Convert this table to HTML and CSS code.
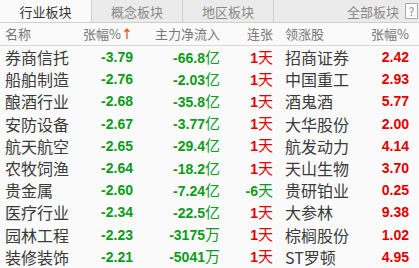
FILE: index.html
```html
<!DOCTYPE html>
<html>
<head>
<meta charset="utf-8">
<link rel="stylesheet" href="styles.css">
</head>
<body>
<div class="panel">
  <div class="tabs">
    <div class="tab active">行业板块</div>
    <div class="tab">概念板块</div>
    <div class="tab">地区板块</div>
    <div class="tab-fill">
      <span class="all">全部板块</span>
      <span class="help">?</span>
    </div>
  </div>
  <div class="table">
    <div class="row head">
      <div class="c name">名称</div>
      <div class="c pct">张幅%<span class="arrow">↑</span></div>
      <div class="c flow">主力净流入</div>
      <div class="c days">连张</div>
      <div class="c lead">领涨股</div>
      <div class="c lpct">张幅%</div>
    </div>
    <div class="row"><div class="c name">券商信托</div><div class="c pct num g">-3.79</div><div class="c flow num g">-66.8<span class="u">亿</span></div><div class="c days num r">1<span class="u">天</span></div><div class="c lead">招商证券</div><div class="c lpct num r">2.42</div></div>
    <div class="row"><div class="c name">船舶制造</div><div class="c pct num g">-2.76</div><div class="c flow num g">-2.03<span class="u">亿</span></div><div class="c days num r">1<span class="u">天</span></div><div class="c lead">中国重工</div><div class="c lpct num r">2.93</div></div>
    <div class="row"><div class="c name">酿酒行业</div><div class="c pct num g">-2.68</div><div class="c flow num g">-35.8<span class="u">亿</span></div><div class="c days num r">1<span class="u">天</span></div><div class="c lead">酒鬼酒</div><div class="c lpct num r">5.77</div></div>
    <div class="row"><div class="c name">安防设备</div><div class="c pct num g">-2.67</div><div class="c flow num g">-3.77<span class="u">亿</span></div><div class="c days num r">1<span class="u">天</span></div><div class="c lead">大华股份</div><div class="c lpct num r">2.00</div></div>
    <div class="row"><div class="c name">航天航空</div><div class="c pct num g">-2.65</div><div class="c flow num g">-29.4<span class="u">亿</span></div><div class="c days num r">1<span class="u">天</span></div><div class="c lead">航发动力</div><div class="c lpct num r">4.14</div></div>
    <div class="row"><div class="c name">农牧饲渔</div><div class="c pct num g">-2.64</div><div class="c flow num g">-18.2<span class="u">亿</span></div><div class="c days num r">1<span class="u">天</span></div><div class="c lead">天山生物</div><div class="c lpct num r">3.70</div></div>
    <div class="row"><div class="c name">贵金属</div><div class="c pct num g">-2.60</div><div class="c flow num g">-7.24<span class="u">亿</span></div><div class="c days num g">-6<span class="u">天</span></div><div class="c lead">贵研铂业</div><div class="c lpct num r">0.25</div></div>
    <div class="row"><div class="c name">医疗行业</div><div class="c pct num g">-2.34</div><div class="c flow num g">-22.5<span class="u">亿</span></div><div class="c days num r">1<span class="u">天</span></div><div class="c lead">大参林</div><div class="c lpct num r">9.38</div></div>
    <div class="row"><div class="c name">园林工程</div><div class="c pct num g">-2.23</div><div class="c flow num g">-3175<span class="u">万</span></div><div class="c days num r">1<span class="u">天</span></div><div class="c lead">棕榈股份</div><div class="c lpct num r">1.02</div></div>
    <div class="row"><div class="c name">装修装饰</div><div class="c pct num g">-2.21</div><div class="c flow num g">-5041<span class="u">万</span></div><div class="c days num r">1<span class="u">天</span></div><div class="c lead">ST罗顿</div><div class="c lpct num r">4.95</div></div>
  </div>
</div>
</body>
</html>
```
FILE: styles.css
```css
html, body {
  margin: 0;
  padding: 0;
  background: #fafafa;
}
.panel {
  width: 419px;
  height: 268px;
  overflow: hidden;
  font-family: "Noto Sans CJK SC", "Liberation Sans", sans-serif;
  background: #fafafa;
}
.tabs {
  display: flex;
  height: 22px;
  border-bottom: 1px solid #cfcfcf;
  background: #ebebeb;
}
.tab {
  width: 90px;
  border-right: 1px solid #cfcfcf;
  display: flex;
  align-items: center;
  justify-content: center;
  font-size: 13px;
  color: #888;
  background: #ebebeb;
}
.tab.active {
  width: 91px;
  background: #fafafa;
  color: #333;
}
.tab-fill {
  flex: 1;
  display: flex;
  align-items: center;
  justify-content: flex-end;
  gap: 6px;
  font-size: 13px;
  color: #888;
}
.help {
  width: 11px;
  height: 14px;
  border: 1px solid #aaa;
  background: #fafafa;
  font-size: 11px;
  line-height: 14px;
  text-align: center;
  color: #888;
  margin-right: 1px;
}
.row {
  display: grid;
  grid-template-columns: 80px 53px 87px 53px 80px 56px;
  height: 22.2px;
  align-items: center;
}
.row.head {
  height: 22px;
  border-bottom: 1px solid #d8d8d8;
  color: #777;
  font-size: 13px;
}
.c {
  white-space: nowrap;
  line-height: 18px;
}
.name {
  padding-left: 5px;
  font-size: 16px;
  color: #3a3a3a;
}
.head .name {
  font-size: 13px;
  color: #777;
}
.pct, .flow, .days, .lpct {
  text-align: right;
}
.lead {
  padding-left: 12px;
  font-size: 16px;
  color: #3a3a3a;
}
.head .lead {
  font-size: 13px;
  color: #777;
}
.arrow {
  color: #e05a00;
  font-weight: bold;
  font-size: 12px;
}
.num {
  font-family: "Liberation Sans", Arial, sans-serif;
  font-weight: bold;
  font-size: 14px;
}
.u {
  font-family: "Noto Sans CJK SC", sans-serif;
  font-weight: normal;
  font-size: 15px;
}
.g { color: #0c9a1c; }
.r { color: #e00000; }
```
